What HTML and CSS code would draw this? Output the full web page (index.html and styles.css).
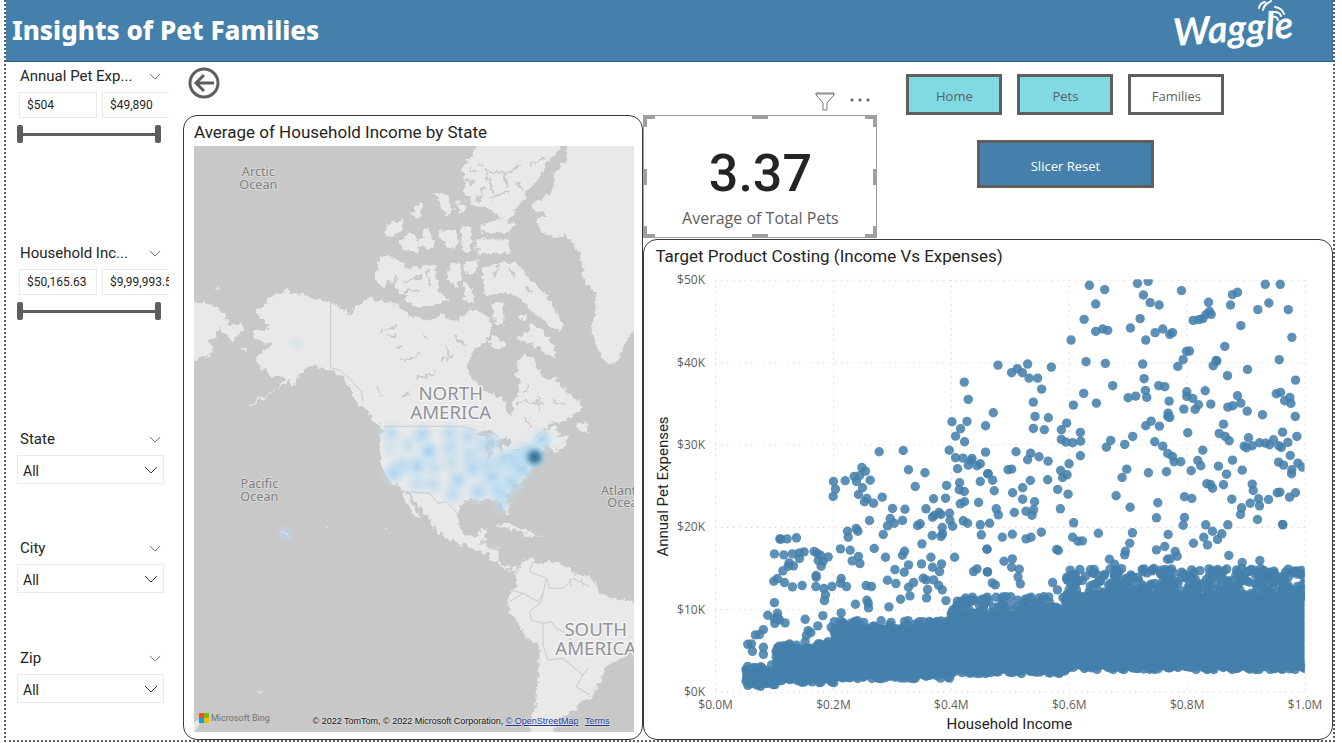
FILE: index.html
```html
<!DOCTYPE html>
<html lang="en">
<head>
<meta charset="utf-8">
<title>Insights of Pet Families</title>
<link rel="stylesheet" href="styles.css">
</head>
<body>
<svg class="defs" aria-hidden="true">
  <symbol id="chevron" viewBox="0 0 14 8"><path d="M1 1l6 6 6-6" fill="none" stroke="currentColor"/></symbol>
</svg>
<div class="report">
  <header class="banner">
    <h1>Insights of Pet Families</h1>
    <svg class="logo" viewBox="0 0 122 60" role="img" aria-label="Waggle">
      <text x="3" y="46" transform="rotate(-4 3 46)">Waggle</text>
      <g fill="none" stroke="#fff" stroke-width="2" stroke-linecap="round">
        <path d="M88 8q1-5 6-6M92 10q1-5 5-7M97 3l3-2M103 12q6 0 7 4M104 7q7 1 9 7M101 17q5-1 6 3"/>
      </g>
    </svg>
  </header>

  <div class="content">
    <aside class="slicers">
      <section class="slicer">
        <h2>Annual Pet Exp...<svg class="chev"><use href="#chevron"/></svg></h2>
        <div class="bounds"><input type="text" value="$504" aria-label="Minimum expense"><input type="text" value="$49,890" aria-label="Maximum expense"></div>
        <div class="range"><input type="range" value="0" aria-label="Expense from"><input type="range" value="100" aria-label="Expense to"></div>
      </section>
      <section class="slicer">
        <h2>Household Inc...<svg class="chev"><use href="#chevron"/></svg></h2>
        <div class="bounds"><input type="text" value="$50,165.63" aria-label="Minimum income"><input type="text" value="$9,99,993.5" aria-label="Maximum income"></div>
        <div class="range"><input type="range" value="0" aria-label="Income from"><input type="range" value="100" aria-label="Income to"></div>
      </section>
      <section class="slicer">
        <h2><label for="state">State</label><svg class="chev"><use href="#chevron"/></svg></h2>
        <div class="pick"><select id="state"><option>All</option></select><svg class="caret"><use href="#chevron"/></svg></div>
      </section>
      <section class="slicer">
        <h2><label for="city">City</label><svg class="chev"><use href="#chevron"/></svg></h2>
        <div class="pick"><select id="city"><option>All</option></select><svg class="caret"><use href="#chevron"/></svg></div>
      </section>
      <section class="slicer">
        <h2><label for="zip">Zip</label><svg class="chev"><use href="#chevron"/></svg></h2>
        <div class="pick"><select id="zip"><option>All</option></select><svg class="caret"><use href="#chevron"/></svg></div>
      </section>
    </aside>

    <main class="board">
      <div class="col-map">
        <div class="back-row">
          <button class="back" aria-label="Back"><svg viewBox="0 0 32 32"><g fill="none" stroke="#605e5c"><circle cx="16" cy="16" r="14" stroke-width="3"/><path d="M26 16H8M16 8l-8 8 8 8" stroke-width="3"/></g></svg></button>
        </div>
        <section class="panel map-panel">
          <h3>Average of Household Income by State</h3>
          <div class="map">
            <svg viewBox="12 3 1323 1758" preserveAspectRatio="xMidYMid slice" role="img" aria-label="Heat map of the Americas">
              <defs>
                <filter id="coast" x="0" y="0" width="100%" height="100%">
                  <feTurbulence type="fractalNoise" baseFrequency="0.06" numOctaves="3" seed="4"/>
                  <feDisplacementMap in="SourceGraphic" scale="26" xChannelSelector="R" yChannelSelector="G"/>
                </filter>
                <radialGradient id="warm"><stop offset="0" stop-color="#9dceed" stop-opacity=".85"/><stop offset=".5" stop-color="#b4daf1" stop-opacity=".55"/><stop offset="1" stop-color="#cfe6f5" stop-opacity="0"/></radialGradient>
                <radialGradient id="hot"><stop offset="0" stop-color="#3c6b88"/><stop offset=".35" stop-color="#4681a6" stop-opacity=".9"/><stop offset=".7" stop-color="#7ab4d8" stop-opacity=".5"/><stop offset="1" stop-color="#a9d3ec" stop-opacity="0"/></radialGradient>
              </defs>
              <rect x="0" y="0" width="1400" height="1800" fill="#c8c8c8"/>
              <g filter="url(#coast)">
                <rect x="-60" y="-60" width="1500" height="1900" fill="#c8c8c8"/>
                <g fill="#e9e9e9">
                  <path d="M256 450L288 434 310 445 340 450 385 465 422 472 445 482 470 500 478 512 500 480 520 470 540 457 565 470 590 470 620 480 640 492 655 505 660 515 690 517 720 528 750 510 780 520 805 525 820 510 845 490 865 500 880 500 895 515 910 540 900 570 885 590 860 610 845 630 830 665 845 700 880 735 930 755 945 770 950 800 965 812 972 790 970 765 988 740 990 715 980 690 985 640 1005 632 1030 640 1045 665 1060 700 1080 705 1095 690 1110 720 1135 750 1170 765 1172 795 1155 812 1120 825 1080 837 1055 860 1035 880 1050 870 1075 848 1100 845 1112 865 1100 880 1135 870 1130 885 1100 903 1082 912 1070 900 1058 915 1045 930 1020 965 1000 1000 965 1030 948 1050 950 1065 958 1095 955 1112 945 1100 935 1075 925 1065 910 1060 885 1060 875 1070 855 1063 830 1068 810 1083 803 1110 805 1140 820 1165 835 1177 860 1173 868 1155 895 1150 890 1170 880 1195 890 1202 930 1210 925 1240 935 1260 955 1265 975 1263 988 1276 978 1282 965 1270 955 1275 940 1265 910 1245 895 1227 855 1213 830 1200 800 1195 750 1170 735 1150 715 1115 695 1095 675 1070 665 1050 650 1040 660 1065 675 1090 695 1120 697 1130 675 1110 660 1090 645 1065 640 1040 625 1023 600 1010 582 970 572 945 572 915 575 865 580 853 555 830 535 795 510 780 495 760 485 735 465 700 440 682 400 670 362 662 345 675 325 690 320 715 305 722 300 705 265 730 235 750 190 780 170 788 215 755 255 735 280 710 285 695 265 695 242 695 230 675 205 665 200 640 225 615 245 605 248 595 210 590 187 570 200 555 240 548 225 530 195 500 225 485 235 460Z"/>
                  <path d="M985 1275L1000 1250 1030 1240 1040 1255 1090 1250 1130 1265 1150 1285 1200 1295 1220 1320 1230 1345 1270 1360 1310 1365 1370 1385 1370 1430 1345 1440 1335 1490 1300 1540 1250 1560 1235 1605 1205 1655 1170 1668 1160 1690 1120 1715 1095 1730 1085 1800 1020 1800 1022 1725 1040 1665 1048 1565 1050 1505 1010 1475 980 1425 955 1390 960 1365 960 1340 980 1325 978 1295Z"/>
                  <path d="M1130 -20H1400V560L1350 545 1325 560 1305 600 1285 645 1265 658 1240 645 1220 600 1205 560 1215 510 1220 440 1190 420 1180 400 1175 340 1150 290 1120 270 1090 275 1060 265 1035 220 1080 215 1030 190 1030 178 1095 130 1090 90 1130 40Z"/>
                  <path d="M865 -20H1110L1110 15 1070 60 1040 110 1015 135 1000 170 970 200 955 230 925 215 900 190 855 185 825 150 820 60 850 35Z"/>
                  <path d="M870 240L930 222 975 235 960 262 880 262ZM855 283H960V325L870 328ZM880 372L910 355 980 355 1030 410 1070 450 1122 540 1110 565 1070 530 1030 500 980 450 930 440 890 455 880 420ZM1020 530L1050 550 1090 600 1095 638 1050 610 980 580 1020 560ZM910 570L950 600 920 612 900 600ZM990 505H1008V525H990Z"/>
                  <path d="M630 375L660 368 735 360 745 430 772 465 730 480 690 488 640 470 660 455 620 440 615 405ZM568 335L600 333 650 365 610 400 585 432 560 410ZM582 275L600 235 640 225 640 250 605 275ZM630 290L660 260 690 290 690 325 640 315ZM700 265L715 245 735 300 720 315 690 300ZM735 145L765 145 790 200 770 210ZM800 165L830 190 815 205ZM745 260L800 258 805 300 775 315ZM815 240L845 250 840 325 815 315ZM780 360L810 350 815 400 800 425 770 400ZM825 348L870 350 850 390 828 380ZM820 410L850 430 855 475 820 465ZM910 480L945 470 940 540 915 535ZM665 205L690 170 700 180 690 225Z"/>
                  <path d="M-10 467L60 475 100 505 125 545 150 535 162 555 130 588 90 550 75 575 60 585 70 628 40 635 -10 655ZM68 434L85 420 98 434ZM150 610L175 608 172 618Z"/>
                  <path d="M918 1143L950 1133 1000 1155 1035 1170 1062 1175 1020 1175 975 1155ZM1155 842L1178 828 1200 865 1170 862ZM1085 912L1135 882 1128 900 1095 918Z"/>
                </g>
                <g fill="none" stroke="#c8c8c8" stroke-width="6">
                  <path d="M865 50L900 80 960 85 990 60M940 85L955 125M890 80L905 130 925 150M820 100L855 115M900 160L960 140M1020 60L1060 40M910 400L925 360M960 370L975 400M1010 420L1020 450M640 410L700 395M640 440L690 435M710 370L720 420M880 130L865 170M980 110L1000 140M840 70L860 80"/>
                  <path d="M570 560L600 550 625 545M590 575L620 570M630 640L660 645 690 625M620 610L640 605M680 700L740 685M770 600L780 640M790 570L830 605M755 645L790 635M700 570L715 580M640 750H660M980 775L1020 770 1060 772M1000 745L1020 720M1090 770L1130 775M1045 750L1050 800M1010 815L1020 850M560 725L580 755" stroke-width="5"/>
                </g>
                <g fill="#c8c8c8">
                  <path d="M850 872L885 848 925 872 900 880ZM890 888L912 880 907 932 890 937ZM918 880L958 882 964 908 942 900 937 928 923 902ZM928 938L962 920 967 930 940 944ZM963 915L992 908 992 920Z"/>
                </g>
              </g>
              <g fill="none" stroke="#c9c9c9" stroke-width="3">
                <path d="M423 472V668L450 675 480 700 515 740 520 770M582 844H820L860 858M640 1040L720 1045 745 1075 770 1070 805 1105M960 930L1045 893 1070 860M870 1200L880 1180M900 1210L925 1215M600 1020L640 1040"/>
                <path d="M1030 1250L1020 1280 1070 1300 1080 1330 1120 1330 1150 1300 1200 1325M1070 1300L1060 1345 1045 1370 1000 1345 960 1335M1060 1345L1055 1370 1020 1400 1025 1425 1060 1435 1060 1500 1075 1545 1120 1540 1180 1590 1195 1570M1060 1435L1085 1430 1100 1450 1130 1465 1160 1510M1180 1590L1160 1625 1200 1650M1140 1300L1145 1325M1175 1300L1180 1325M960 1370L1000 1345"/>
              </g>
              <g fill="#e6e6e6"><circle cx="590" cy="1150" r="3"/><path d="M405 1143l12 2-2 5zM200 1640l22-2-10 8zM185 1495h10M12 1735l12-10 8 6-10 20-10 10z"/></g>
              <g fill="url(#warm)">
                <circle cx="603" cy="865" r="44" opacity=".7"/><circle cx="655" cy="900" r="42" opacity=".6"/><circle cx="697" cy="868" r="42" opacity=".9"/><circle cx="717" cy="920" r="46"/><circle cx="717" cy="920" r="24"/><circle cx="680" cy="963" r="44"/><circle cx="635" cy="962" r="44" opacity=".8"/><circle cx="612" cy="985" r="44" opacity=".9"/><circle cx="733" cy="968" r="40" opacity=".6"/><circle cx="682" cy="1015" r="44" opacity=".6"/><circle cx="730" cy="1018" r="42" opacity=".6"/><circle cx="780" cy="865" r="44" opacity=".7"/><circle cx="780" cy="910" r="44" opacity=".7"/><circle cx="785" cy="955" r="44" opacity=".55"/><circle cx="805" cy="1005" r="44" opacity=".9"/><circle cx="790" cy="1048" r="42" opacity=".7"/><circle cx="835" cy="875" r="46" opacity=".7"/><circle cx="840" cy="930" r="46" opacity=".7"/><circle cx="850" cy="970" r="46" opacity=".9"/><circle cx="908" cy="995" r="50"/><circle cx="865" cy="1040" r="44" opacity=".9"/><circle cx="885" cy="900" r="46" opacity=".7"/><circle cx="912" cy="892" r="34" opacity=".7"/><circle cx="890" cy="955" r="48" opacity=".7"/><circle cx="938" cy="950" r="48" opacity=".8"/><circle cx="965" cy="1010" r="46"/><circle cx="925" cy="1040" r="46" opacity=".8"/><circle cx="945" cy="1055" r="40" opacity=".6"/><circle cx="935" cy="1085" r="30" opacity=".6"/><circle cx="990" cy="968" r="48"/><circle cx="998" cy="970" r="34"/><circle cx="970" cy="940" r="48" opacity=".8"/><circle cx="1015" cy="925" r="52"/><circle cx="1058" cy="885" r="42"/><circle cx="600" cy="912" r="36" opacity=".4"/><circle cx="322" cy="596" r="32" opacity=".35"/><circle cx="290" cy="1168" r="28" opacity=".7"/>
              </g>
              <circle cx="1035" cy="936" r="38" fill="url(#hot)"/>
              <path d="M275 1160l18 8 6 10" fill="none" stroke="#d3e2ec" stroke-width="4"/>
              <g class="ocean"><text x="206" y="94">Arctic</text><text x="206" y="131">Ocean</text><text x="209" y="1030">Pacific</text><text x="209" y="1067">Ocean</text><text x="1301" y="1049">Atlantic</text><text x="1310" y="1086">Ocean</text></g>
              <g class="continent"><text x="783" y="765">NORTH</text><text x="783" y="822">AMERICA</text><text x="1218" y="1473">SOUTH</text><text x="1218" y="1531">AMERICA</text></g>
            </svg>
            <div class="credits">
              <span class="bing"><svg viewBox="0 0 10 10"><path fill="#f25022" d="M0 0h5v5H0z"/><path fill="#7fba00" d="M5 0h5v5H5z"/><path fill="#00a4ef" d="M0 5h5v5H0z"/><path fill="#ffb900" d="M5 5h5v5H5z"/></svg>Microsoft Bing</span>
              <span class="copy">© 2022 TomTom, © 2022 Microsoft Corporation, <a href="#">© OpenStreetMap</a> <a class="terms" href="#">Terms</a></span>
            </div>
          </div>
        </section>
      </div>

      <div class="col-chart">
        <div class="top">
          <div class="card-wrap">
            <div class="tools">
              <button aria-label="Filters"><svg width="20" height="20" viewBox="0 0 20 20"><path d="M1 1h18v2l-7 8v7H8v-7L1 3z" fill="none" stroke="#7a7876"/><path d="M1 2h18" stroke="#7a7876"/></svg></button>
              <button aria-label="More options"><svg width="20" height="20" viewBox="0 0 20 20" fill="#605e5c"><circle cx="2" cy="8" r="1.5"/><circle cx="10" cy="8" r="1.5"/><circle cx="18" cy="8" r="1.5"/></svg></button>
            </div>
            <section class="card">
              <strong>3.37</strong>
              <span>Average of Total Pets</span>
              <i class="grip tl"></i><i class="grip tr"></i><i class="grip bl"></i><i class="grip br"></i>
              <i class="grip tm"></i><i class="grip bm"></i><i class="grip lm"></i><i class="grip rm"></i>
            </section>
          </div>
          <nav class="nav">
            <div class="tabs"><button class="tab">Home</button><button class="tab">Pets</button><button class="tab current">Families</button></div>
            <button class="reset">Slicer Reset</button>
          </nav>
        </div>
        <section class="panel chart-panel">
          <h3>Target Product Costing (Income Vs Expenses)</h3>
          <svg id="scatter" viewBox="0 0 687 468" role="img" aria-label="Annual pet expenses against household income">
            <defs><clipPath id="plot"><rect x="71" y="9" width="589" height="420"/></clipPath></defs>
            <g class="grid"></g>
            <g class="dots" clip-path="url(#plot)"></g>
            <g class="ylab"></g>
            <g class="xlab"></g>
            <text class="axis" x="365" y="458">Household Income</text>
            <text class="axis" transform="translate(24 216) rotate(-90)">Annual Pet Expenses</text>
          </svg>
        </section>
      </div>
    </main>
  </div>
</div>
<script src="chart.js"></script>
</body>
</html>
```
FILE: styles.css
```css
* { box-sizing: border-box; }
body { margin: 0; background: #fff; color: #252423; font-family: "Open Sans", "Noto Sans", sans-serif; }
button, input, select { font: inherit; color: inherit; }
.defs { position: absolute; width: 0; height: 0; }
h1, h2, h3 { margin: 0; font-weight: 400; }

.report { display: flex; flex-direction: column; min-height: calc(100vh - 1px); margin: 0 7px 0 4px; border: 2px dotted #605e5c; border-top: 0; }
.banner { display: flex; justify-content: space-between; height: 62px; padding-left: 6px; background: #4480ab; border-bottom: 1px solid #2f6084; border-right: 1px solid #36709a; }
.banner h1 { color: #fff; font: 800 26px/60px "Noto Sans", sans-serif; }
.logo { width: 122px; height: 60px; margin-right: 39px; overflow: visible; }
.logo text { fill: #fff; font: italic 700 38px Lato, sans-serif; }

.content { display: flex; flex: 1; }
.slicers { display: grid; grid-template-rows: 177px 186px 109px 110px auto; width: 163px; flex: none; padding-left: 11px; overflow: hidden; }
.slicer h2 { display: flex; align-items: center; justify-content: space-between; width: 144px; height: 28px; margin-bottom: 2px; padding-left: 3px; font: 15px Roboto, sans-serif; }
.chev { width: 12px; height: 7px; color: #605e5c; }
.bounds { display: flex; gap: 5px; padding-left: 2px; font: 12px Roboto, sans-serif; }
.bounds input { flex: none; width: 78px; height: 26px; padding: 0 7px; border: 1px solid #eaeaea; background: #fff; }
.range { position: relative; width: 144px; height: 18px; margin-top: 7px; }
.range::before { content: ""; position: absolute; left: 3px; right: 3px; top: 8px; height: 3px; background: #605e5c; }
.range input { position: absolute; inset: 0; width: 100%; height: 18px; margin: 0; appearance: none; background: none; pointer-events: none; }
.range input::-webkit-slider-thumb { appearance: none; width: 6px; height: 18px; border-radius: 2px; background: #605e5c; pointer-events: auto; }
.pick { position: relative; width: 147px; }
.pick select { width: 100%; height: 29px; padding: 2px 5px 0; appearance: none; border: 1px solid #eaeaea; border-radius: 0; background: #fff; font: 14px Roboto, sans-serif; }
.caret { position: absolute; right: 6px; top: 11px; width: 14px; height: 8px; color: #3b3a39; pointer-events: none; }

.board { display: flex; flex: 1; min-width: 0; padding-left: 14px; }
.col-map { display: flex; flex: 460 1 0; flex-direction: column; min-width: 0; }
.col-chart { display: flex; flex: 689 1 0; flex-direction: column; min-width: 0; }
.back-row { height: 53px; padding: 5px 0 0 5px; }
.back { width: 32px; height: 32px; padding: 0; border: 0; background: none; }
.panel { display: flex; flex: 1; flex-direction: column; min-height: 0; border: 1px solid #3b3a39; border-radius: 14px; }
.panel h3 { height: 30px; padding-left: 11px; font: 17px/32px Roboto, sans-serif; white-space: nowrap; }
.map-panel { padding: 0 8px 7px 10px; }
.map-panel h3 { padding-left: 0; }
.map { position: relative; flex: 1; overflow: hidden; background: #c8c8c8; }
.map > svg { position: absolute; width: 100%; height: 100%; }
.ocean text, .continent text { text-anchor: middle; paint-order: stroke; stroke-linejoin: round; }
.ocean text { fill: #808080; stroke: #d8d8d8; stroke-width: 6px; font: 38px "Noto Sans", sans-serif; }
.continent text { fill: #92929a; stroke: #f4f4f4; stroke-width: 9px; font: 56px "Noto Sans", sans-serif; }
.credits { position: absolute; left: 5px; right: 25px; bottom: 5px; display: flex; justify-content: space-between; align-items: flex-end; white-space: nowrap; }
.bing { display: flex; align-items: center; gap: 2px; padding-bottom: 2px; color: #707070; font: 9px/14px Roboto, sans-serif; }
.bing svg { width: 10px; height: 10px; }
.copy { color: #111; font: 9px/12px "Liberation Sans", sans-serif; text-shadow: 0 0 2px #fff; }
.copy a { color: #1f3a93; }
.terms { margin-left: 4px; }

.top { display: flex; height: 177px; }
.card-wrap { width: 234px; flex: none; }
.tools { display: flex; justify-content: flex-end; gap: 15px; height: 53px; padding: 30px 7px 0 0; }
.tools button { width: 20px; height: 20px; padding: 0; border: 0; background: none; }
.card { position: relative; display: flex; flex-direction: column; align-items: center; height: 123px; border: 1px solid #a19f9d; }
.card strong { margin-top: 28px; font: 500 52px/60px Roboto, sans-serif; }
.card span { color: #605e5c; font-size: 16px; line-height: 28px; }
.grip { position: absolute; width: 12px; height: 12px; border: 0 solid #a19f9d; }
.tl { left: -1px; top: -1px; border-width: 4px 0 0 4px; }
.tr { right: -1px; top: -1px; border-width: 4px 4px 0 0; }
.bl { left: -1px; bottom: -1px; border-width: 0 0 4px 4px; }
.br { right: -1px; bottom: -1px; border-width: 0 4px 4px 0; }
.tm, .bm { left: calc(50% - 8px); width: 16px; height: 4px; background: #a19f9d; }
.lm, .rm { top: calc(50% - 8px); width: 4px; height: 16px; background: #a19f9d; }
.tm { top: -1px; }
.bm { bottom: -1px; }
.lm { left: -1px; }
.rm { right: -1px; }

.nav { display: flex; flex-direction: column; align-items: center; gap: 25px; padding: 12px 0 0 29px; font-size: 13px; }
.tabs { display: flex; gap: 15px; }
.tab { width: 96px; height: 41px; padding-top: 4px; border: 3px solid #605e5c; background: #80d9e3; color: #605e5c; }
.tab.current { background: #fff; }
.reset { width: 177px; height: 48px; padding-top: 4px; border: 3px solid #605e5c; background: #4480ab; color: #fff; }

#scatter { flex: 1; width: 100%; min-height: 0; }
.grid line { stroke: #c8c6c4; stroke-dasharray: 1 5; }
.dots circle { fill: #4480ab; fill-opacity: .87; }
.dots path { fill: #4480ab; }
.ylab text, .xlab text { fill: #605e5c; font: 12px "Open Sans", sans-serif; }
.ylab text { text-anchor: end; }
.xlab text, .axis { text-anchor: middle; }
.axis { fill: #252423; font: 15px Roboto, sans-serif; }
```
FILE: chart.js
```js
const NS = 'http://www.w3.org/2000/svg';
const svg = document.getElementById('scatter');
const layer = name => svg.querySelector('.' + name);
function add(parent, tag, attrs, text) {
  const el = document.createElementNS(NS, tag);
  for (const k in attrs) el.setAttribute(k, attrs[k]);
  if (text) el.textContent = text;
  parent.appendChild(el);
}

for (let i = 0; i <= 5; i++) {
  const x = 71.5 + i * 117.8, y = 10 + i * 82.3;
  add(layer('grid'), 'line', { x1: x, x2: x, y1: 10, y2: 422 });
  add(layer('grid'), 'line', { x1: 71, x2: 660, y1: y, y2: y });
  add(layer('ylab'), 'text', { x: 61, y: y + 4 }, '$' + (50 - i * 10) + 'K');
  add(layer('xlab'), 'text', { x: x, y: 438 }, '$' + (i / 5).toFixed(1) + 'M');
}

// Outliers, one list per quarter of the plot: origin, then x,y pairs in thirds of a unit.
const quarters = [
  [0, 0, '960,335 972,387 923,454 968,453 949,475 934,497 961,514 915,539 934,562 956,563 983,564 980,571 972,584 998,586 1008,580 940,595 705,544 777,540 793,598 842,607 813,648 653,591 664,602 646,616 630,618 637,633 678,629 603,631 568,633 574,656 567,678 655,652 643,672 668,684 661,694 688,698 714,680 745,714 782,716 845,715 868,685 904,683 907,645 946,637 945,658 960,663 961,694 948,700 1003,696 1008,633 1030,610'],
  [340, 0, '315,45 361,58 334,101 299,147 260,209 334,183 355,176 370,180 459,39 491,33 477,74 497,97 524,104 467,145 438,173 484,209 512,187 535,176 556,192 564,187 591,61 672,96 675,123 680,132 665,132 655,145 643,148 626,150 744,73 759,66 738,104 769,166 721,228 842,42 887,42 853,98 820,118 911,118 922,201 884,268 933,329 305,274 363,279 475,281 479,325 385,346 298,369 336,398 267,404 483,360 487,381 454,377 431,382 523,346 541,349 554,392 580,288 596,268 606,243 615,242 686,286 695,270 697,272 729,316 789,297 662,361 607,364 607,378 625,384 642,403 632,417 598,416 679,401 759,376 769,398 745,406 730,410 788,422 834,433 875,370 888,366 900,391 916,381 919,399 932,438 41,284 130,281 99,295 82,307 114,307 134,323 160,323 201,290 172,356 147,395 27,427 152,438 192,442 4,466 147,474 180,478 247,458 231,478 288,486 231,507 245,515 265,517 289,512 288,556 254,580 229,600 248,613 235,621 220,657 251,671 228,715 4,545 95,544 139,548 130,568 164,559 191,572 82,596 71,598 12,610 25,629 138,630 190,628 30,661 85,667 115,652 115,686 151,694 36,715 366,530 379,510 421,522 445,498 511,514 535,527 484,466 500,452 525,467 551,428 550,438 556,441 550,549 564,558 569,574 589,574 610,487 655,539 640,570 649,586 620,601 546,604 492,607 427,596 413,621 395,676 437,710 520,697 600,679 622,684 717,461 704,489 722,498 734,511 792,502 779,527 786,532 803,526 825,517 843,518 855,523 867,508 883,526 890,531 910,516 894,485 937,498 917,555 882,575 897,584 940,578 953,590 922,598 921,610 744,569 702,587 726,611 773,599 667,640 678,642 684,653 717,643 803,641 806,660 742,686 822,685 797,698 825,706 852,687 771,712 878,667 886,665 915,680 933,667'],
  [0, 230, '738,54 750,68 730,76 775,60 820,75 828,70 865,50 870,45 884,36 890,42 916,38 917,60 925,77 894,81 895,100 890,108 864,105 717,102 676,60 636,84 641,92 610,92 612,110 833,130 860,170 865,200 886,213 892,190 832,190 931,170 793,193 780,215 752,207 724,170 775,164 781,152 690,144 589,145 618,149 643,168 647,189 624,181 591,234 589,248 607,258 666,255 682,258 634,311 668,299 672,308 673,322 734,319 730,239 755,249 808,246 793,260 797,286 769,296 837,233 846,238 868,238 850,267 847,292 883,254 894,268 591,337 957,61 970,68 1008,73 1011,103 1028,146 1030,214 988,213 998,205 905,300 1025,298 407,115 410,116 429,115 457,112 391,160 419,163 445,160 466,157 480,154 466,174 435,187 448,196 432,197 416,211 400,234 389,242 421,246 445,259 474,255 510,153 519,158 529,164 522,180 537,182 552,169 531,197 516,225 516,230 515,258 539,264 563,258 544,283 541,300 391,306 371,344 400,338 400,350 391,355 406,358 392,368 423,367 483,356 536,345 521,376 358,387 334,403 346,402 311,431 322,430 325,452 358,440 358,461 492,390 500,396 487,405 561,380'],
  [340, 230, '42,43 90,36 125,32 143,44 148,28 268,67 16,68 54,110 84,101 125,115 140,110 171,95 265,110 281,122 294,121 342,98 444,97 436,128 423,152 421,163 8,146 59,182 84,175 82,200 105,206 101,229 108,250 9,214 24,247 33,253 217,147 222,150 205,246 219,268 375,176 391,191 516,52 600,51 596,74 551,102 541,138 516,148 572,153 578,167 549,176 557,175 627,128 658,110 664,73 684,92 669,133 699,117 712,100 730,73 768,42 819,57 894,72 895,73 733,165 773,186 826,180 4,297 35,290']
];
const dot = (x, y) => add(layer('dots'), 'circle', { cx: x.toFixed(1), cy: y.toFixed(1), r: 4.7 });
for (const [ox, oy, list] of quarters)
  for (const p of list.split(' ')) {
    const [x, y] = p.split(',').map(Number);
    dot(ox + x / 3, oy + y / 3);
  }

// Dense bands: left, right, highest dot, top of the solid mass, lowest dot.
const bands = [
  [102, 131, 394, 399, 416],
  [132, 190, 371, 377, 412],
  [190, 308, 350, 358, 408],
  [307, 424, 326, 342, 403],
  [422, 662, 298, 324, 399]
];
let seed = 7;
const rnd = () => (seed = (seed * 16807) % 2147483647) / 2147483647;
for (const [l, r, high, top, low] of bands) {
  add(layer('dots'), 'path', { d: `M${l} ${top}H${r}V${low - 4}H${l}Z` });
  for (let x = l; x <= r; x += 1.8) {
    dot(x, top + rnd() * 4);
    dot(x, low - rnd() * 6);
  }
  for (let y = top; y < low - 2; y += 3) dot(l + rnd() * 2, y);
  const extra = (r - l) * (top - high) / 22;
  for (let i = 0; i < extra; i++) dot(l + rnd() * (r - l), high + rnd() * (top - high));
}
```
